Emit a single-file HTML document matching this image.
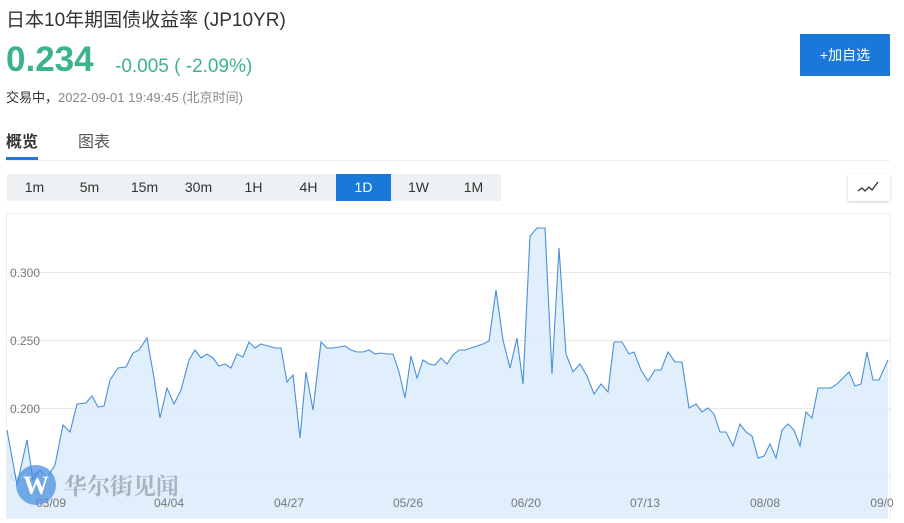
<!DOCTYPE html>
<html><head><meta charset="utf-8"><style>
*{margin:0;padding:0;box-sizing:border-box}
body{width:904px;height:523px;overflow:hidden;background:#fff;font-family:"Liberation Sans","Noto Sans CJK SC",sans-serif;position:relative}
.a{position:absolute;white-space:nowrap}
.tf{position:absolute;top:174px;left:7px;width:494px;height:27px;background:#eef1f4}
.tf span{position:absolute;top:0;width:55px;height:27px;line-height:27px;text-align:center;font-size:14px;color:#333}
</style></head><body>
<div class="a" style="left:6px;top:5px;font-size:19px;color:#333">日本10年期国债收益率 (JP10YR)</div>
<div class="a" style="left:6px;top:40px;font-size:35px;font-weight:bold;color:#3db389">0.234</div>
<div class="a" style="left:115px;top:56px;font-size:19px;color:#3db389">-0.005 ( -2.09%)</div>
<div class="a" style="left:6px;top:87px;font-size:13px;color:#333">交易中，<span style="color:#888">2022-09-01 19:49:45 (北京时间)</span></div>
<div class="a" style="left:800px;top:34px;width:90px;height:42px;background:#1a78d8;color:#fff;font-size:14px;line-height:42px;text-align:center">+加自选</div>
<div class="a" style="left:6px;top:128px;font-size:16px;font-weight:bold;color:#333">概览</div>
<div class="a" style="left:78px;top:128px;font-size:16px;color:#555">图表</div>
<div class="a" style="left:6px;top:157px;width:32px;height:3px;background:#1a78d8"></div>
<div class="a" style="left:6px;top:160px;width:884px;height:1px;background:#eee"></div>
<div class="tf">
<span style="left:0">1m</span><span style="left:55px">5m</span><span style="left:110px">15m</span><span style="left:164px">30m</span><span style="left:219px">1H</span><span style="left:274px">4H</span><span style="left:329px;background:#1a78d8;color:#fff">1D</span><span style="left:384px">1W</span><span style="left:439px">1M</span>
</div>
<div class="a" style="left:848px;top:174px;width:42px;height:27px;background:#fff;box-shadow:0 1px 3px rgba(0,0,0,.2)">
<svg width="42" height="27"><path d="M10 17l4-3 3 3 4-4 3 3 6-8" fill="none" stroke="#333" stroke-width="1.3"/></svg></div>
<div class="a" style="left:6px;top:213px;width:885px;height:306px;border:1px solid #eee"></div>
<svg class="a" style="left:0;top:0" width="904" height="523">
<g stroke="#e8e8e8" stroke-width="1"><line x1="7" y1="272.5" x2="890" y2="272.5"/><line x1="7" y1="340.5" x2="890" y2="340.5"/><line x1="7" y1="408.5" x2="890" y2="408.5"/><line x1="7" y1="476.5" x2="890" y2="476.5"/></g>
<g font-size="12" fill="#777" font-family="Liberation Sans,sans-serif"><text x="10" y="277">0.300</text><text x="10" y="345">0.250</text><text x="10" y="413">0.200</text><text x="10" y="481">0.150</text></g>
<polygon fill="#dcecfb" fill-opacity="0.85" points="7,518 7,430 17,485 27,440 33,480 40,470 47,478 55,465 63,425 70,432 77,404 86,403 92,396 98,407 104,406 110,380 118,368 126,367 133,353 139,350 147,338 154,378 160,418 167,388 174,404 181,390 189,360 195,350 201,358 207,354 213,358 219,366 225,364 231,368 237,354 243,357 249,342 255,348 261,344 268,346 275,348 281,348 287,382 293,375 300,438 306,372 313,410 321,342 327,348 333,348 339,347 345,346 351,350 357,352 363,352 369,350 375,354 381,353 387,354 393,354 399,372 405,398 411,356 417,378 423,360 429,364 435,365 441,358 447,364 453,355 459,350 465,350 471,348 477,346 483,344 489,341 496,290 503,340 510,368 517,338 523,384 530,236 537,228 545,228 552,374 559,248 566,354 573,372 580,364 587,376 594,394 601,384 608,392 614,342 622,342 629,354 634,352 641,370 648,381 655,370 661,370 668,352 675,362 682,362 689,408 696,404 702,412 708,408 714,414 720,432 726,432 733,446 740,424 746,432 752,436 758,458 764,456 770,444 776,458 782,430 788,424 794,430 800,446 806,412 812,418 818,388 825,388 831,388 837,384 843,378 849,372 855,386 861,384 867,352 873,380 879,380 888,360 888,518"/>
<polyline fill="none" stroke="#4a90d9" stroke-width="1.1" points="7,430 17,485 27,440 33,480 40,470 47,478 55,465 63,425 70,432 77,404 86,403 92,396 98,407 104,406 110,380 118,368 126,367 133,353 139,350 147,338 154,378 160,418 167,388 174,404 181,390 189,360 195,350 201,358 207,354 213,358 219,366 225,364 231,368 237,354 243,357 249,342 255,348 261,344 268,346 275,348 281,348 287,382 293,375 300,438 306,372 313,410 321,342 327,348 333,348 339,347 345,346 351,350 357,352 363,352 369,350 375,354 381,353 387,354 393,354 399,372 405,398 411,356 417,378 423,360 429,364 435,365 441,358 447,364 453,355 459,350 465,350 471,348 477,346 483,344 489,341 496,290 503,340 510,368 517,338 523,384 530,236 537,228 545,228 552,374 559,248 566,354 573,372 580,364 587,376 594,394 601,384 608,392 614,342 622,342 629,354 634,352 641,370 648,381 655,370 661,370 668,352 675,362 682,362 689,408 696,404 702,412 708,408 714,414 720,432 726,432 733,446 740,424 746,432 752,436 758,458 764,456 770,444 776,458 782,430 788,424 794,430 800,446 806,412 812,418 818,388 825,388 831,388 837,384 843,378 849,372 855,386 861,384 867,352 873,380 879,380 888,360"/>
<g font-size="12" fill="#777" font-family="Liberation Sans,sans-serif" text-anchor="middle"><text x="51" y="507">03/09</text><text x="169" y="507">04/04</text><text x="289" y="507">04/27</text><text x="408" y="507">05/26</text><text x="526" y="507">06/20</text><text x="645" y="507">07/13</text><text x="765" y="507">08/08</text><text x="882" y="507">09/0</text></g>
<circle cx="36" cy="485" r="20" fill="#4a90e2" fill-opacity="0.75"/>
<text x="36" y="494" font-size="26" font-weight="bold" fill="#fff" text-anchor="middle" font-family="Liberation Serif,serif">W</text>
<text x="64" y="494" font-size="23" font-weight="bold" fill="#9aa4b0" fill-opacity="0.8" font-family="Noto Serif CJK SC,serif">华尔街见闻</text>
</svg>
</body></html>
